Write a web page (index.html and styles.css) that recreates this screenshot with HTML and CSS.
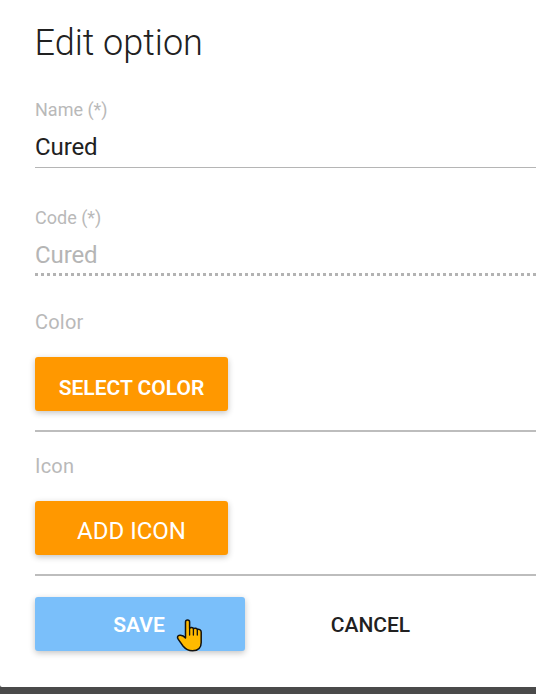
FILE: index.html
```html
<!DOCTYPE html>
<html lang="en">
<head>
<meta charset="utf-8">
<title>Edit option</title>
<link rel="stylesheet" href="styles.css">
</head>
<body>
<main class="dialog">
  <h1 class="title">Edit option</h1>
  <div class="field">
    <span class="label">Name (*)</span>
    <div class="value">Cured</div>
  </div>
  <div class="field field-disabled">
    <span class="label">Code (*)</span>
    <div class="value">Cured</div>
  </div>
  <section class="picker">
    <span class="picker-label">Color</span>
    <button class="btn btn-orange">SELECT COLOR</button>
  </section>
  <section class="picker">
    <span class="picker-label">Icon</span>
    <button class="btn btn-orange btn-icon">ADD ICON</button>
  </section>
  <footer class="actions">
    <button class="btn btn-save">SAVE
      <svg class="cursor" width="28" height="34" viewBox="0 0 28 34">
        <path d="M9.5 18V3C9.5 .2 13.6 .2 13.6 3V9.2C14.5 8.3 17 8.3 17.4 9.6C18.5 8.8 21 9.1 21.3 10.4C22.8 9.9 25.2 10.6 25.2 13V23.5C25.2 29 21.8 31.7 16.5 31.7C12 31.7 9.5 30 7.2 27.2L2.3 20.4C.7 18.2 1.6 16.4 3.9 16.2C6 16 8 17 9.5 19Z" fill="#ffba00" stroke="#111" stroke-width="1.5" stroke-linejoin="round"/>
        <path d="M13.6 9V16M17.4 10V16M21.3 11V16" fill="none" stroke="#111" stroke-width="1.3" stroke-linecap="round"/>
      </svg>
    </button>
    <button class="btn btn-cancel">CANCEL</button>
  </footer>
</main>
</body>
</html>
```
FILE: styles.css
```css
* { box-sizing: border-box; }
body {
  margin: 0;
  height: 694px;
  overflow: hidden;
  background: #4a4a4a;
  font-family: Roboto, sans-serif;
  color: #212121;
}
.dialog {
  height: 687px;
  padding: 22px 0 0 35px;
  background: #fff;
  border-bottom-left-radius: 2px;
  overflow: hidden;
}
.title {
  margin: 0 0 34px -.5px;
  font-size: 36px;
  line-height: 42px;
  font-weight: 300;
}
.field {
  height: 70px;
  margin-bottom: 38px;
  border-bottom: 1px solid #b5b5b5;
}
.field-disabled {
  border-bottom: 3px dotted #b3b3b3;
  margin-bottom: 34px;
}
.label {
  display: block;
  height: 35px;
  font-size: 18px;
  line-height: 24px;
  color: #b9b9b9;
}
.value { font-size: 24px; line-height: 28px; letter-spacing: -.1px; }
.field-disabled .value { color: #b5b5b5; }
.picker {
  height: 122px;
  margin-bottom: 22px;
  border-bottom: 2px solid #bdbdbd;
}
.picker-label {
  display: block;
  height: 47px;
  font-size: 20px;
  line-height: 24px;
  letter-spacing: .2px;
  color: #b9b9b9;
}
.btn {
  display: block;
  height: 54px;
  padding: 8px 0 0;
  border: 0;
  border-radius: 3px;
  font: 600 21px/46px Roboto, sans-serif;
  color: #fff;
  box-shadow: 0 2px 6px rgba(0, 0, 0, .24);
}
.btn-orange { width: 193px; background: #ff9800; }
.btn-icon { font-size: 24px; font-weight: 400; padding-top: 6px; }
.actions { display: flex; gap: 20px; margin-top: -1px; }
.btn-save {
  position: relative;
  width: 210px;
  padding: 1px 2px 0 0;
  background: #7abffa;
}
.btn-cancel {
  width: 210px;
  padding: 1px 0 0 1px;
  background: none;
  color: #212121;
  font-weight: 500;
  box-shadow: none;
}
.cursor { position: absolute; left: 141px; top: 22px; }
```
